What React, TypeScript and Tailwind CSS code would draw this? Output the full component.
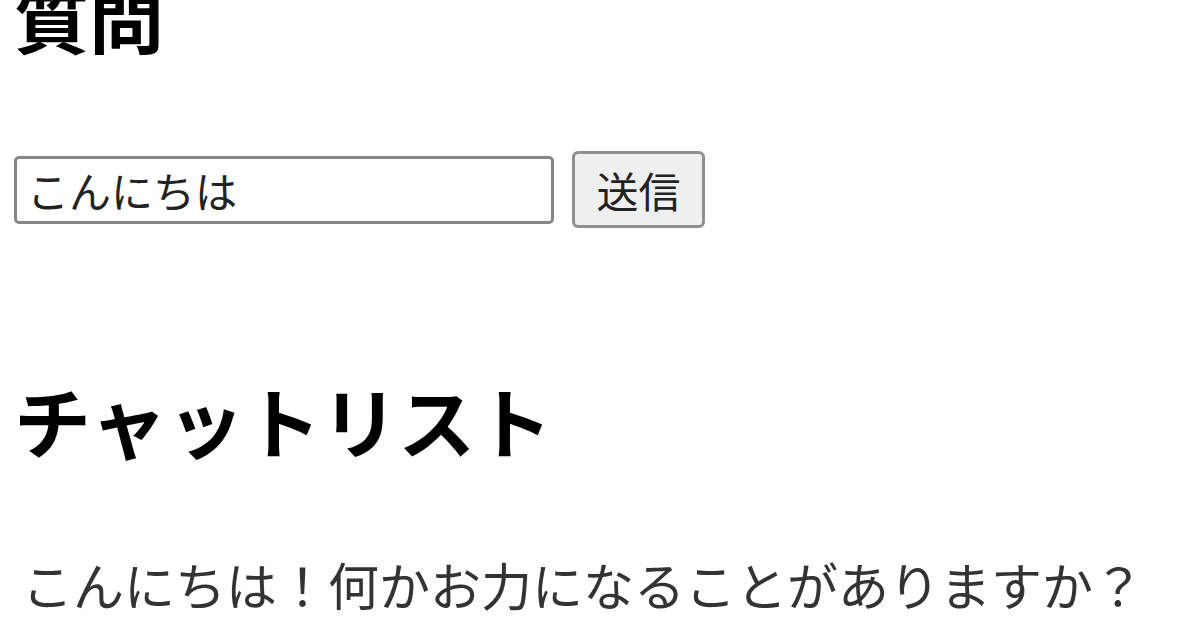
import { useState } from "react"

const font = { fontFamily: '"Noto Sans CJK JP", "Noto Sans", sans-serif' }

export default function App() {
  const [text, setText] = useState("こんにちは")

  return (
    <div className="min-h-screen bg-white pl-[14px] text-black overflow-hidden" style={font}>
      <h2 className="-mt-[22px] text-[75px] leading-[75px] font-bold">質問</h2>

      <div className="mt-[98px] flex items-center gap-[18px]">
        <input
          value={text}
          onChange={(e) => setText(e.target.value)}
          className="h-[68px] w-[540px] rounded-[5px] border-[3px] border-[#858585] bg-white pl-[10px] text-[42px] text-[#222] outline-none"
        />
        <button className="h-[77px] w-[133px] rounded-[6px] border-[3px] border-[#8f8f8f] bg-[#efefef] text-[42px] text-[#222]">
          送信
        </button>
      </div>

      <h2 className="mt-[153px] text-[77px] leading-[77px] font-bold">チャットリスト</h2>

      <ul className="mt-[101px] ml-[8px]">
        <li className="text-[51px] leading-[51px] text-[#333] whitespace-nowrap">
          こんにちは！何かお力になることがありますか？
        </li>
      </ul>
    </div>
  )
}
